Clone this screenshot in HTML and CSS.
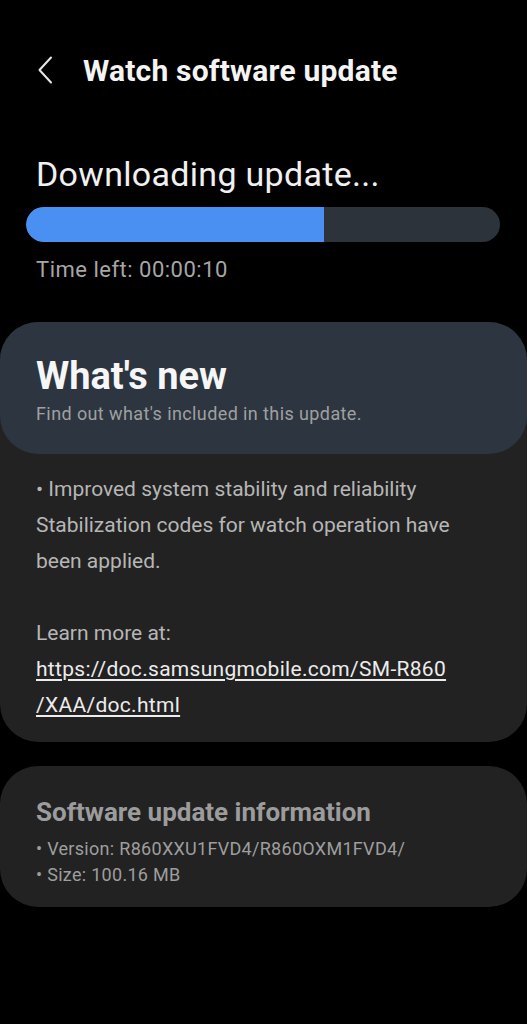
FILE: index.html
```html
<!DOCTYPE html>
<html>
<head>
<meta charset="utf-8">
<link rel="stylesheet" href="styles.css">
</head>
<body>
<div class="screen">
  <header class="topbar">
    <span class="back">
      <svg width="16" height="28" viewBox="0 0 16 28"><path d="M14 1.5 L2.5 14 L14 26.5" fill="none" stroke="#e8e8e8" stroke-width="2" stroke-linecap="round" stroke-linejoin="round"/></svg>
    </span>
    <h1 class="title">Watch software update</h1>
  </header>

  <section class="status">
    <h2 class="status-title">Downloading update...</h2>
    <div class="progress"><div class="progress-fill" style="width:62.8%"></div></div>
    <p class="time-left">Time left: 00:00:10</p>
  </section>

  <section class="card whatsnew">
    <div class="card-head">
      <h3 class="card-title">What's new</h3>
      <p class="card-sub">Find out what's included in this update.</p>
    </div>
    <div class="card-body">
      <p>• Improved system stability and reliability<br>Stabilization codes for watch operation have been applied.</p>
      <p class="spacer">&nbsp;</p>
      <p>Learn more at:<br><a class="link" href="#">https://doc.samsungmobile.com/SM-R860<br>/XAA/doc.html</a></p>
    </div>
  </section>

  <section class="card info">
    <h3 class="info-title">Software update information</h3>
    <p class="info-line">• Version: R860XXU1FVD4/R860OXM1FVD4/</p>
    <p class="info-line">• Size: 100.16 MB</p>
  </section>
</div>
</body>
</html>
```

FILE: styles.css
```css
html, body {
  margin: 0;
  padding: 0;
  background: #000;
}
body {
  font-family: Roboto, "Noto Sans", sans-serif;
  color: #fff;
  width: 527px;
  height: 1024px;
  overflow: hidden;
}
h1, h2, h3, p { margin: 0; font-weight: normal; }

.topbar {
  display: flex;
  align-items: center;
  height: 50px;
  padding-top: 45px;
  padding-left: 37px;
}
.back { display: flex; width: 16px; height: 28px; }
.title {
  margin-left: 30px;
  font-size: 30px;
  font-weight: 700;
  color: #f4f4f4;
  letter-spacing: 0.2px;
}

.status { padding-top: 59px; }
.status-title {
  margin-left: 36px;
  font-size: 34px;
  line-height: 40px;
  color: #f0f0f0;
  letter-spacing: 0.3px;
}
.progress {
  margin: 13px 27px 0 26px;
  height: 35px;
  border-radius: 18px;
  background: #2d333b;
  overflow: hidden;
}
.progress-fill {
  height: 100%;
  background: #4a90f2;
  border-radius: 18px 0 0 18px;
}
.time-left {
  margin: 14px 0 0 36px;
  font-size: 22px;
  line-height: 28px;
  color: #a6a6a6;
  letter-spacing: 0.5px;
}

.card {
  background: #222222;
  border-radius: 38px;
}
.whatsnew { margin-top: 38px; }
.card-head {
  background: #2c3540;
  border-radius: 38px;
  padding: 32px 36px 28px;
}
.card-title {
  font-size: 38px;
  font-weight: 700;
  line-height: 44px;
  color: #f6f6f6;
}
.card-sub {
  margin-top: 4px;
  font-size: 18px;
  line-height: 24px;
  color: #a0a0a0;
  letter-spacing: 0.4px;
}
.card-body {
  padding: 17px 30px 19px 36px;
  font-size: 21px;
  line-height: 36px;
  color: #b6b6b6;
}
.link {
  color: #ececec;
  text-decoration: underline;
  text-underline-offset: 3px;
  letter-spacing: 0.3px;
}

.info {
  margin-top: 24px;
  padding: 30px 36px 19px;
}
.info-title {
  font-size: 26px;
  font-weight: 700;
  line-height: 32px;
  color: #9c9c9c;
  margin-bottom: 8px;
}
.info-line {
  font-size: 18px;
  line-height: 26px;
  color: #9e9e9e;
  letter-spacing: 0.3px;
}
```
